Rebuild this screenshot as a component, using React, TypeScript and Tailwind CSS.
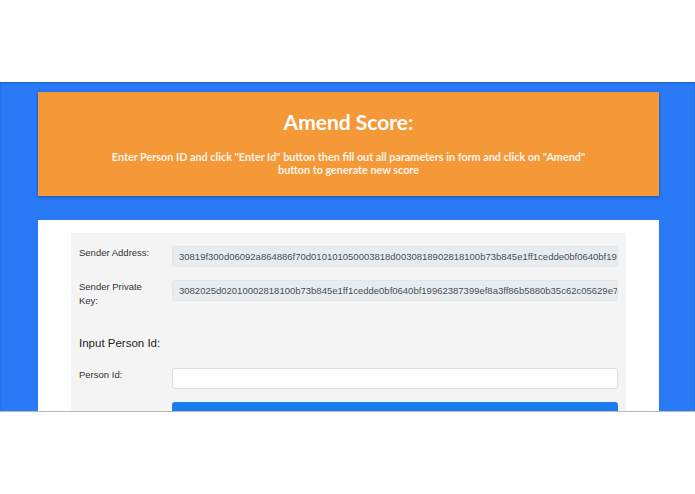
import React from "react";

const senderAddress =
  "30819f300d06092a864886f70d010101050003818d0030818902818100b73b845e1ff1cedde0bf0640bf19962387399ef8a3ff86b5880b35c62c05629e73";
const privateKey =
  "3082025d02010002818100b73b845e1ff1cedde0bf0640bf19962387399ef8a3ff86b5880b35c62c05629e73a1f0c2d2e";

function Row({ label, children }: { label: string; children: React.ReactNode }) {
  return (
    <div className="flex items-start h-[21px]">
      <label className="w-[93px] shrink-0 pr-[17px] pt-[0px] text-[9.5px] leading-[14px] text-[#333]">{label}</label>
      <div className="flex-1 min-w-0">{children}</div>
    </div>
  );
}

export default function App() {
  return (
    <div className="w-[695px] h-[494px] bg-white overflow-hidden" style={{ fontFamily: '"Liberation Sans", Arial, sans-serif' }}>
      <div className="h-[82px] bg-white" />
      <section className="h-[330px] overflow-hidden bg-[#2a7af7] pl-[38px] pr-[36px] pt-[10px] shadow-[inset_0_1px_2px_rgba(0,0,0,0.25)] border-b border-[#b9b9b9]">
        <div
          className="h-[104px] bg-[#f49838] text-white text-center shadow-[0_1px_3px_rgba(0,0,0,0.35)] pt-[16px]"
          style={{ fontFamily: 'Lato, "Open Sans", sans-serif' }}
        >
          <h1 className="text-[21px] font-bold leading-[28px]">Amend Score:</h1>
          <p className="mt-[14px] mx-auto w-[492px] text-[10.8px] font-bold leading-[13px] text-[#fdf5ea]">
            Enter Person ID and click "Enter Id" button then fill out all parameters in form and click on "Amend" button to generate new score
          </p>
        </div>

        <div className="mt-[24px] bg-white px-[33px] pt-[13px] h-[300px]">
          <div className="bg-[#f4f4f4] px-[8px] pt-[13px] h-[300px]">
            <div className="flex flex-col gap-[13px]">
              <Row label="Sender Address:">
                <div className="h-[21px] rounded-[3px] border border-[#e2e4e6] bg-[#e9ecef] px-[6px] text-[9.5px] leading-[19px] text-[#495057] whitespace-nowrap overflow-hidden">
                  {senderAddress}
                </div>
              </Row>
              <Row label="Sender Private Key:">
                <div className="h-[21px] rounded-[3px] border border-[#e2e4e6] bg-[#e9ecef] px-[6px] text-[9.5px] leading-[19px] text-[#495057] whitespace-nowrap overflow-hidden">
                  {privateKey}
                </div>
              </Row>
            </div>

            <h2 className="mt-[35px] text-[11.5px] font-medium leading-[14px] text-[#222]">Input Person Id:</h2>

            <div className="mt-[18px]">
              <Row label="Person Id:">
                <input className="block w-full h-[21px] rounded-[3px] border border-[#dcdfe2] bg-white px-[6px] text-[9px] outline-none" />
              </Row>
            </div>

            <div className="mt-[13px] flex">
              <div className="w-[93px] shrink-0" />
              <button className="flex-1 h-[24px] rounded-[3px] bg-[#1b7cf0] text-white text-[10px] leading-[24px] pt-[6px]">
                Enter Id
              </button>
            </div>
          </div>
        </div>
      </section>
      <div className="bg-white" />
    </div>
  );
}
